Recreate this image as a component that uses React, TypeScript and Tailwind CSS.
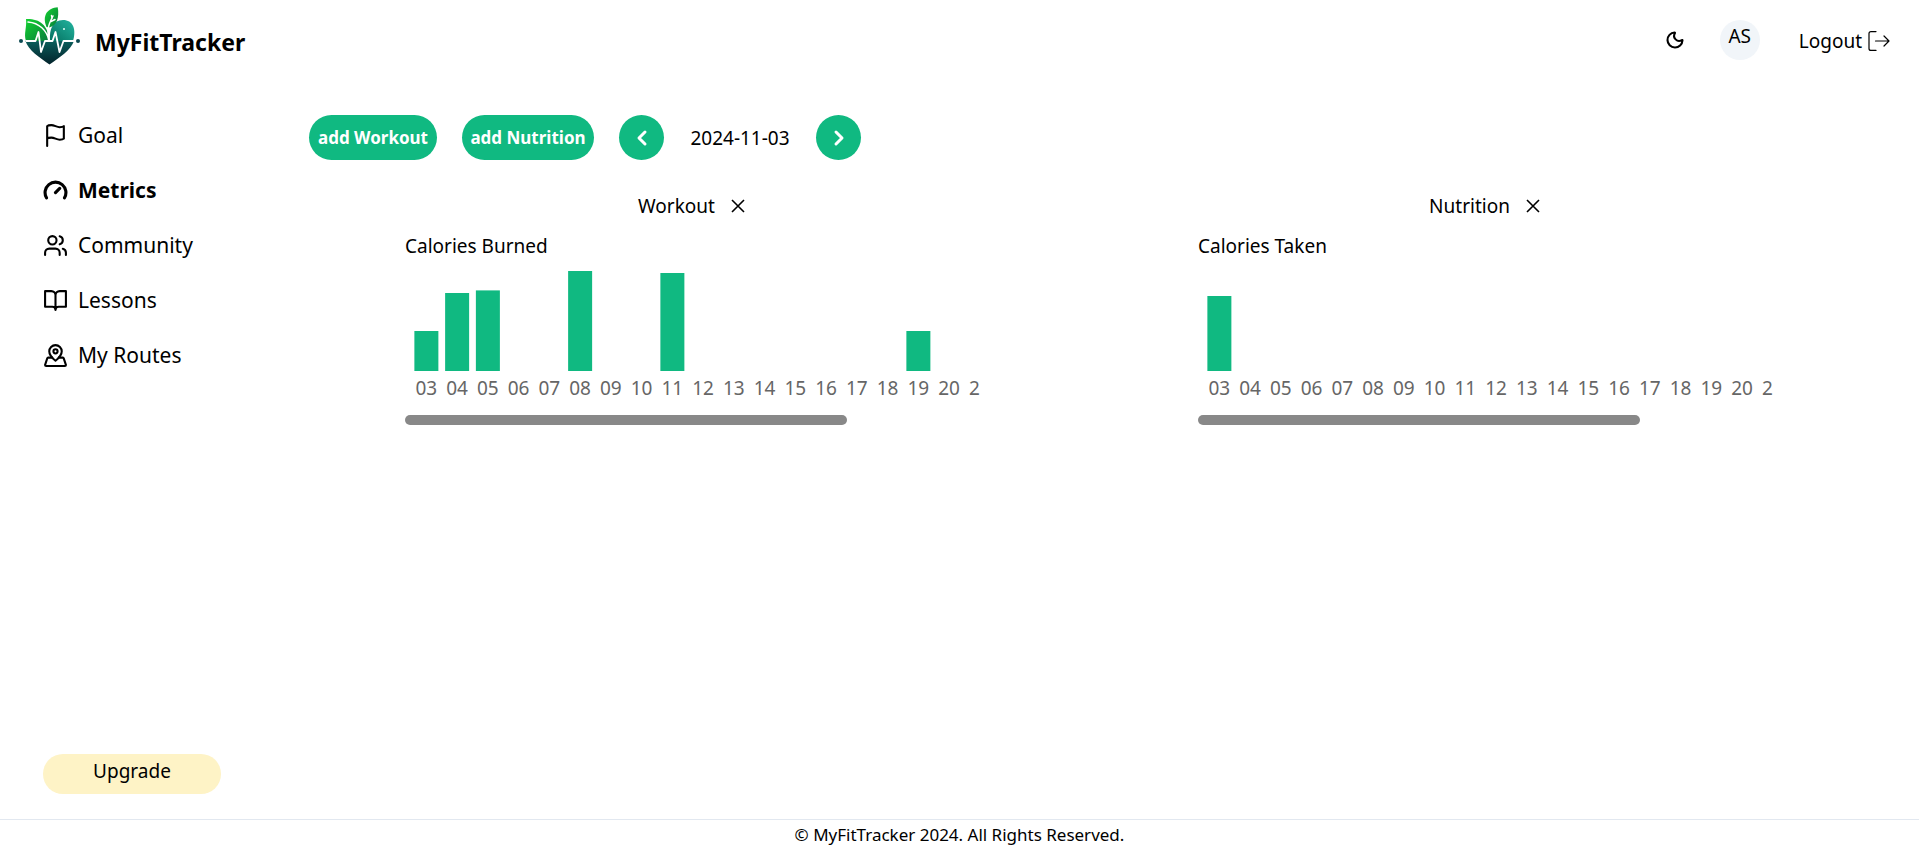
import { useEffect, useRef, useState } from "react";
import type { ReactNode } from "react";
import { ChevronLeft, ChevronRight, Moon } from "lucide-react";

type Day = { day: string; value: number };

const DAYS = Array.from({ length: 24 }, (_, i) => String(i + 3).padStart(2, "0"));

function series(values: Record<string, number>): Day[] {
  return DAYS.map((day) => ({ day, value: values[day] ?? 0 }));
}

const burned = series({ "03": 200, "04": 390, "05": 403, "08": 500, "11": 490, "19": 200 });
const taken = series({ "03": 375 });

const CHART_WIDTH = 751;
const CHART_LEFT = 6;
const STEP = 30.75;
const BAR = 24;
const BASELINE = 107;
const UNIT = 0.2;

function Logo() {
  return (
    <svg viewBox="0 0 62 62" className="mb-3 size-[62px] shrink-0" role="img" aria-label="MyFitTracker logo">
      <defs>
        <linearGradient id="leaf" x1="0" y1="0" x2="1" y2="1">
          <stop offset="0" stopColor="#12d32f" />
          <stop offset="1" stopColor="#087a3c" />
        </linearGradient>
        <linearGradient id="lobe" x1="1" y1="0" x2="0" y2="1">
          <stop offset="0" stopColor="#23b5a0" />
          <stop offset="1" stopColor="#04705f" />
        </linearGradient>
        <linearGradient id="base" x1="0" y1="0" x2="0" y2="1">
          <stop offset="0" stopColor="#0b5e5b" />
          <stop offset="1" stopColor="#03222b" />
        </linearGradient>
      </defs>
      <path d="M6.500 38H55C52 47 40 55 30.500 61.500C21 55 9 47 6.500 38Z" fill="url(#base)" />
      <path d="M31 38C30 26 34 17 44 17C54 17 57.500 26 54 38Z" fill="url(#lobe)" />
      <path d="M7 16C20 15.500 29 21 30.500 38H7C4.500 30 8 25 7 16Z" fill="url(#leaf)" />
      <path d="M27.500 24C22.500 12 29 5 38.700 4.300C40.500 14 38 23 30 24.500Z" fill="url(#leaf)" />
      <path d="M9 19C20 20 28 27 30 38M30.500 38C28 28 28.500 23 34 13M32 18.500L36 16.500M33 15.500L32.500 12.500" fill="none" stroke="#fff" strokeWidth="1.5" strokeLinecap="round" />
      <path d="M7 38H16.500L19.500 29L22 49L26 38H33.500L36.500 29L40.500 49L44.500 38H55" fill="none" stroke="#fff" strokeWidth="1.8" strokeLinejoin="round" />
      <circle cx="45" cy="26" r="1" fill="#e6fff8" />
      <circle cx="2" cy="38" r="2" fill="#0c4a52" />
      <circle cx="59" cy="38" r="2" fill="#0c4a52" />
    </svg>
  );
}

function NavIcon({ bold, children }: { bold?: boolean; children: ReactNode }) {
  return (
    <svg
      viewBox="0 0 24 24"
      fill="none"
      stroke="currentColor"
      strokeWidth={bold ? 3 : 2}
      strokeLinecap="round"
      strokeLinejoin="round"
      className="size-[25px] shrink-0"
      aria-hidden="true"
    >
      {children}
    </svg>
  );
}

const NAV = [
  {
    label: "Goal",
    icon: <path d="M4 15s1-1 4-1 5 2 8 2 4-1 4-1V3s-1 1-4 1-5-2-8-2-4 1-4 1zM4 22v-7" />,
  },
  {
    label: "Metrics",
    active: true,
    icon: <path d="m12 14 4-4M3.34 19a10 10 0 1 1 17.32 0" />,
  },
  {
    label: "Community",
    icon: (
      <>
        <path d="M16 21v-2a4 4 0 0 0-4-4H6a4 4 0 0 0-4 4v2M22 21v-2a4 4 0 0 0-3-3.87M16 3.13a4 4 0 0 1 0 7.75" />
        <circle cx="9" cy="7" r="4" />
      </>
    ),
  },
  {
    label: "Lessons",
    icon: <path d="M2 3h6a4 4 0 0 1 4 4v14a3 3 0 0 0-3-3H2zM22 3h-6a4 4 0 0 0-4 4v14a3 3 0 0 1 3-3h7z" />,
  },
  {
    label: "My Routes",
    icon: (
      <>
        <path d="M18 8c0 4.5-6 9-6 9s-6-4.5-6-9a6 6 0 0 1 12 0" />
        <circle cx="12" cy="8" r="2" />
        <path d="M8.835 14H5a1 1 0 0 0-.9.7l-2 6c-.1.1-.1.2-.1.3 0 .6.4 1 1 1h18c.6 0 1-.4 1-1 0-.1 0-.2-.1-.3l-2-6a1 1 0 0 0-.9-.7h-3.835" />
      </>
    ),
  },
];

function Chart({ title, data }: { title: string; data: Day[] }) {
  const scroller = useRef<HTMLDivElement>(null);
  const [thumb, setThumb] = useState({ width: 77, left: 0 });

  const sync = () => {
    const el = scroller.current;
    if (!el) return;
    setThumb({
      width: Math.min(100, (el.clientWidth / el.scrollWidth) * 100),
      left: (el.scrollLeft / el.scrollWidth) * 100,
    });
  };

  useEffect(() => {
    sync();
    window.addEventListener("resize", sync);
    return () => window.removeEventListener("resize", sync);
  }, []);

  return (
    <div className="mx-auto w-3/4">
      <h3>{title}</h3>
      <div ref={scroller} onScroll={sync} className="mt-[3px] overflow-x-auto [scrollbar-width:none]">
        <svg width={CHART_WIDTH} height="151" role="img" aria-label={title} className="block max-w-none">
          {data.map(({ day, value }, i) => {
            const center = CHART_LEFT + STEP * (i + 0.5);
            return (
              <g key={day}>
                {value > 0 && (
                  <rect
                    x={center - BAR / 2}
                    y={BASELINE - value * UNIT}
                    width={BAR}
                    height={value * UNIT}
                    fill="#10b981"
                  />
                )}
                <text x={center} y={BASELINE + 24} textAnchor="middle" fill="#666">
                  {day}
                </text>
              </g>
            );
          })}
        </svg>
      </div>
      <div className="h-[10px]">
        <div
          className="h-full rounded-full bg-[#888]"
          style={{ width: `${thumb.width}%`, marginLeft: `${thumb.left}%` }}
        />
      </div>
    </div>
  );
}

function Panel({ name, title, data }: { name: string; title: string; data: Day[] }) {
  return (
    <section>
      <div className="mb-[10px] flex items-center justify-center gap-4 pr-[3px]">
        <h2>{name}</h2>
        <button type="button" aria-label={`Remove ${name}`}>
          <svg viewBox="0 0 14 14" className="size-[14px]" fill="none" stroke="currentColor" strokeWidth="1.6" aria-hidden="true">
            <path d="M1 1l12 12M13 1L1 13" />
          </svg>
        </button>
      </div>
      <Chart title={title} data={data} />
    </section>
  );
}

const pill = "h-[45px] rounded-full bg-[#10b981] text-white";

export default function App() {
  return (
    <div className="flex min-h-screen flex-col bg-white font-['Noto_Sans','Open_Sans',sans-serif] text-[19px] leading-[30px] text-black">
      <header className="flex h-20 items-center pr-[29px] pl-[19px]">
        <a href="#home" className="flex items-center gap-[14px]">
          <Logo />
          <span className="pt-1 text-[23px] font-bold">MyFitTracker</span>
        </a>
        <div className="ml-auto flex items-center">
          <button type="button" aria-label="Toggle dark mode">
            <Moon className="size-5" strokeWidth={2.5} />
          </button>
          <span className="ml-[35px] flex size-10 justify-center rounded-full bg-slate-100 pt-px">AS</span>
          <button type="button" className="ml-[39px] flex items-center gap-[6px] pt-[2px]">
            Logout
            <svg viewBox="0 0 22 20" className="h-5 w-[22px]" fill="none" stroke="currentColor" strokeWidth="1.2" strokeLinecap="round" strokeLinejoin="round" aria-hidden="true">
              <path d="M8 .6H3Q1 .6 1 2.6V17.4Q1 19.4 3 19.4H8M7.500 10H21M16 5l5 5-5 5" />
            </svg>
          </button>
        </div>
      </header>

      <div className="flex flex-1">
        <aside className="flex w-[309px] shrink-0 flex-col pt-10 pb-[25px] pl-[43px]">
          <nav className="flex flex-col gap-[25px] text-[21px]">
            {NAV.map(({ label, icon, active }) => (
              <a
                key={label}
                href={`#${label.toLowerCase().replace(" ", "-")}`}
                className={active ? "flex items-center gap-[10px] font-bold" : "flex items-center gap-[10px]"}
              >
                <NavIcon bold={active}>{icon}</NavIcon>
                {label}
              </a>
            ))}
          </nav>
          <button type="button" className="mt-auto h-10 w-[178px] rounded-full bg-amber-100 pb-[7px]">
            Upgrade
          </button>
        </aside>

        <main className="flex-1 pt-[35px] pr-[49px]">
          <div className="flex items-center gap-[25px]">
            <button type="button" className={`${pill} w-[128px] text-[17px] font-bold`}>
              add Workout
            </button>
            <button type="button" className={`${pill} w-[132px] text-[17px] font-bold`}>
              add Nutrition
            </button>
            <button type="button" aria-label="Previous day" className={`${pill} flex w-[45px] items-center justify-center`}>
              <ChevronLeft className="size-6" strokeWidth={3} />
            </button>
            <time dateTime="2024-11-03" className="min-w-[102px] text-center">
              2024-11-03
            </time>
            <button type="button" aria-label="Next day" className={`${pill} flex w-[45px] items-center justify-center`}>
              <ChevronRight className="size-6" strokeWidth={3} />
            </button>
          </div>
          <div className="mt-[31px] grid grid-cols-2 gap-[25px]">
            <Panel name="Workout" title="Calories Burned" data={burned} />
            <Panel name="Nutrition" title="Calories Taken" data={taken} />
          </div>
        </main>
      </div>

      <footer className="border-t border-slate-200 pb-[5px] text-center text-[17px]">
        © MyFitTracker 2024. All Rights Reserved.
      </footer>
    </div>
  );
}
